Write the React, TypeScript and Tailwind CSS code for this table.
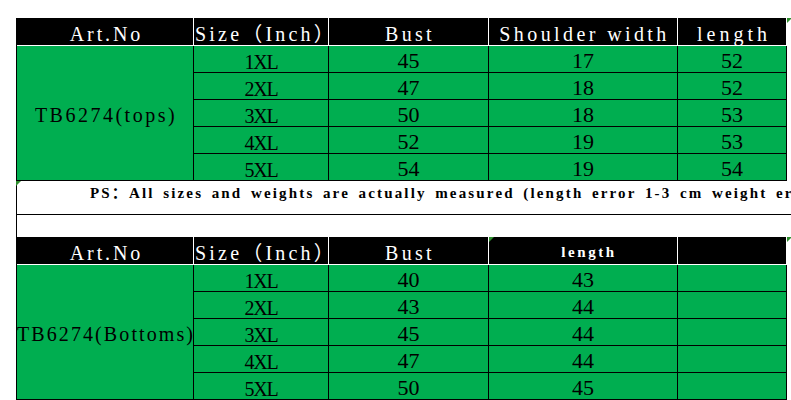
import React from "react";

const SERIF20 = "font-['Liberation_Serif','Noto_Sans_CJK_SC',serif] text-[20px] leading-[16px]";
const SERIF22 = "font-['Liberation_Serif','Noto_Sans_CJK_SC',serif] text-[22px] leading-[16px]";

function Head({ children, className = "" }: { children?: React.ReactNode; className?: string }) {
  return (
    <div
      className={`flex items-end whitespace-nowrap bg-black text-white border-r border-b border-white ${className}`}
    >
      {children}
    </div>
  );
}

function Cell({ children, className = "" }: { children?: React.ReactNode; className?: string }) {
  return (
    <div
      className={`flex justify-center whitespace-nowrap bg-[#00ae50] text-black border-r border-b border-black ${className}`}
    >
      {children}
    </div>
  );
}

function Marker() {
  return (
    <svg width="5" height="5" viewBox="0 0 5 5" className="block">
      <polygon points="0,0 5,0 0,5" fill="#2f8f2f" />
    </svg>
  );
}

type Row = [string, string, string?, string?];

function SizeTable({
  label,
  labelClass,
  rows,
  second,
}: {
  label: string;
  labelClass: string;
  rows: Row[];
  second?: boolean;
}) {
  return (
    <div className="grid w-max grid-cols-[177px_135px_160px_189px_109px] grid-rows-[28px_repeat(5,27px)] border-l border-black">
      <Head className={`justify-center pb-[3px] tracking-[2.9px] pl-[3px] ${SERIF20}`}>Art.No</Head>
      <Head className={`justify-start pl-[1px] pb-[3px] tracking-[3.2px] ${SERIF20}`}>Size（Inch）</Head>
      <Head className={`justify-center pb-[3px] tracking-[3.3px] pl-[3px] ${SERIF20}`}>Bust</Head>
      {second ? (
        <Head className="justify-center pb-[4px] pl-[12px] tracking-[2.6px] font-['Liberation_Serif',serif] text-[15px] leading-[16px] font-bold">
          length
        </Head>
      ) : (
        <Head className={`justify-center pb-[3px] tracking-[3.4px] pl-[3px] ${SERIF20}`}>Shoulder width</Head>
      )}
      <Head className={`justify-center pb-[3px] tracking-[4px] pl-[4px] ${SERIF20}`}>{second ? "" : "length"}</Head>

      <Cell className={`row-span-5 items-center pt-[3px] ${labelClass} ${SERIF20}`}>{label}</Cell>
      {rows.map((r, i) => (
        <React.Fragment key={i}>
          <Cell className={`items-end pb-[2px] tracking-[-1.3px] ${SERIF20}`}>{r[0]}</Cell>
          <Cell className={`items-end pb-[3px] ${SERIF22}`}>{r[1]}</Cell>
          <Cell className={`items-end pb-[3px] ${SERIF22}`}>{r[2] ?? ""}</Cell>
          <Cell className={`items-end pb-[3px] ${SERIF22}`}>{r[3] ?? ""}</Cell>
        </React.Fragment>
      ))}
    </div>
  );
}

export default function App() {
  const tops: Row[] = [
    ["1XL", "45", "17", "52"],
    ["2XL", "47", "18", "52"],
    ["3XL", "50", "18", "53"],
    ["4XL", "52", "19", "53"],
    ["5XL", "54", "19", "54"],
  ];
  const bottoms: Row[] = [
    ["1XL", "40", "43", ""],
    ["2XL", "43", "44", ""],
    ["3XL", "45", "44", ""],
    ["4XL", "47", "44", ""],
    ["5XL", "50", "45", ""],
  ];

  return (
    <div className="relative h-[400px] w-[791px] overflow-hidden bg-white pt-[18px] pl-[16px]">
      <SizeTable label="TB6274(tops)" labelClass="tracking-[2.5px] pl-[2px]" rows={tops} />

      <div className="h-[34px] w-[775px] border-l border-b border-black pl-[73px] pt-[4px]">
        <div className="whitespace-nowrap font-['Liberation_Serif','Noto_Sans_CJK_SC',serif] text-[15px] leading-[16px] font-bold tracking-[2.16px] [word-spacing:2.65px] text-black">
          PS：All sizes and weights are actually measured (length error 1-3 cm weight error 0.1-0.3 kg)
        </div>
      </div>
      <div className="h-[22px] w-[775px] border-l border-black" />

      <SizeTable label="TB6274(Bottoms)" labelClass="tracking-[2.1px] pl-[2px]" rows={bottoms} second />

      <div className="absolute left-[16px] top-[181px]">
        <Marker />
      </div>
      <div className="absolute left-[489px] top-[237px]">
        <Marker />
      </div>
      <div className="absolute left-[787px] top-[18px]">
        <Marker />
      </div>
      <div className="absolute left-[787px] top-[237px]">
        <Marker />
      </div>
    </div>
  );
}
